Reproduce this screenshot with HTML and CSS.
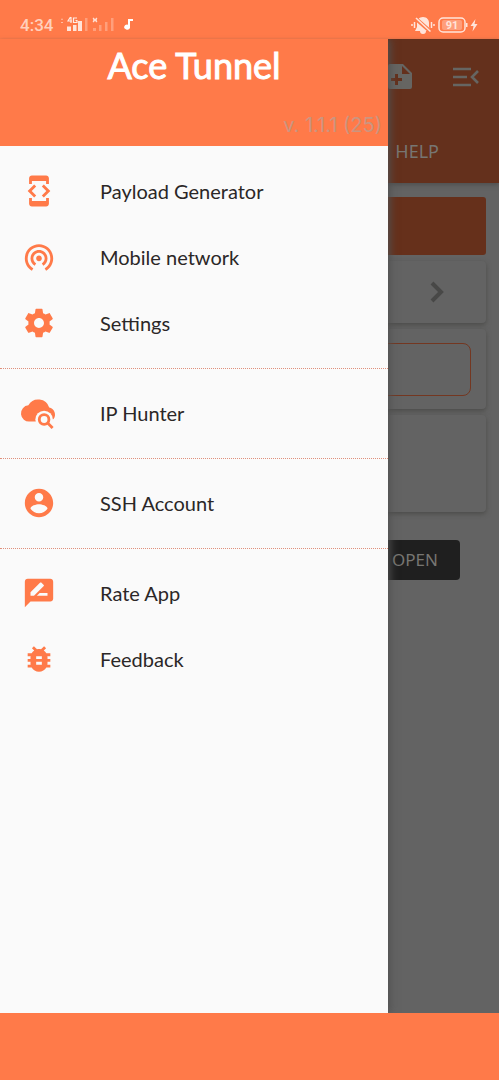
FILE: index.html
```html
<!DOCTYPE html>
<html lang="en">
<head>
<meta charset="utf-8">
<meta name="viewport" content="width=device-width, initial-scale=1">
<title>Ace Tunnel</title>
<link rel="stylesheet" href="styles.css">
</head>
<body>
<div class="screen">
  <header class="status">
    <div class="status-left">
      <span class="clock">4:34</span>
      <svg class="signals" viewBox="0 0 74 18" aria-hidden="true">
        <path d="M1 4l1-2 1 2zM1 6h2v1H1z" opacity=".5"/>
        <g fill="none" stroke="#fff" stroke-width="1.2" opacity=".85"><path d="M10.500 1L8 5h4M11 1v6M17 2h-3.500v4.500H17V4.500h-1.500"/></g>
        <path d="M7 10.500h4V15H7zM13 9h3.500v6H13zM18 5h4v10h-4z" opacity=".8"/>
        <path d="M25 2h2.500v13H25zM33 12h3v3h-3zM39 9h2.500v6H39zM45 6h2.500v9H45zM51 2h2.500v13H51z" opacity=".28"/>
        <path d="M33 2l4 4M37 2l-4 4M33 4h4" stroke="#fff" stroke-width="1.200" opacity=".75"/>
        <path d="M68 3h5v2h-3v7a3 2.500 0 1 1-2-3.300z"/>
      </svg>
    </div>
    <svg class="power" viewBox="0 0 68 18" aria-hidden="true">
      <g opacity=".8">
        <path d="M12 1c4 0 6 3 6 6v4l2 4h-5a3 3 0 0 1-6 0H4l2-4V7c0-3 2-6 6-6z"/>
        <path d="M1 8v2M3.500 6v6M20.500 6v6M23 8v2" stroke="#fff" stroke-width="1.500"/>
        <path d="M4 2l16 14" stroke="#ff7a49" stroke-width="4"/>
        <path d="M5 2l14.500 13.500" stroke="#fff" stroke-width="1.600"/>
        <rect x="28" y="2" width="26" height="14" rx="4" fill="none" stroke="#fff" stroke-width="1.500"/>
        <rect x="31" y="4" width="20" height="10" rx="2" opacity=".35"/>
        <path d="M55 7h1.500v4H55z"/>
        <text x="41" y="13" text-anchor="middle" class="charge">91</text>
        <path d="M64.500 3l-5 7h3l-1 5.500 5-7.500h-3z"/>
      </g>
    </svg>
  </header>

  <div class="stage">
    <main class="page">
      <div class="appbar">
        <div class="tools">
          <button class="tool" aria-label="Import file"><svg class="tool-icon" viewBox="0 0 26 26"><path fill-rule="evenodd" d="M3 0h13l9 9v14a2 2 0 0 1-2 2H3a2 2 0 0 1-2-2V2a2 2 0 0 1 2-2zM15 2v8h8zM8 10v4H4v3h4v4h3v-4h4v-3h-4v-4z"/></svg></button>
          <button class="tool" aria-label="Open menu"><svg class="tool-icon" viewBox="0 0 26 20"><path d="M0 2h18M0 10h14M0 18h18M25 4l-6 6 6 6" fill="none" stroke="#666562" stroke-width="2.600"/></svg></button>
        </div>
        <div class="tabs"><button class="tab">HELP</button></div>
      </div>
      <div class="cards">
        <div class="banner"></div>
        <div class="card choice"><svg class="chevron" viewBox="0 0 14 22" aria-hidden="true"><path d="M2 2l9 9-9 9" fill="none" stroke="#484847" stroke-width="4"/></svg></div>
        <div class="card entry"><div class="outline"></div></div>
        <div class="card details"></div>
      </div>
      <div class="actions"><button class="open">OPEN</button></div>
    </main>

    <aside class="drawer">
      <div class="drawer-head">
        <h1 class="title">Ace Tunnel</h1>
        <p class="version">v. 1.1.1 (25)</p>
      </div>
      <nav class="menu">
        <div class="group">
          <a class="item" href="#payload"><svg class="icon" viewBox="0 0 24 24"><path d="M7 5h10v2h2V3c0-1.100-.9-1.990-2-1.990L7 1c-1.100 0-2 .9-2 2v4h2V5zm8.410 11.590L20 12l-4.590-4.590L14 8.830 17.170 12 14 15.170l1.410 1.420zM10 15.170L6.830 12 10 8.830 8.590 7.410 4 12l4.590 4.590L10 15.170zM17 19H7v-2H5v4c0 1.100.9 2 2 2h10c1.100 0 2-.9 2-2v-4h-2v2z"/><path d="M6 2h12v3H6zM6 19h12v3H6z"/></svg>Payload Generator</a>
          <a class="item" href="#network"><svg class="icon" viewBox="0 0 24 24"><path d="M12 11c-1.100 0-2 .9-2 2s.9 2 2 2 2-.9 2-2-.9-2-2-2zm6 2c0-3.310-2.690-6-6-6s-6 2.690-6 6c0 2.220 1.210 4.150 3 5.190l1-1.740c-1.190-.7-2-1.970-2-3.450 0-2.210 1.790-4 4-4s4 1.790 4 4c0 1.480-.81 2.750-2 3.450l1 1.740c1.790-1.040 3-2.970 3-5.190zM12 3C6.480 3 2 7.480 2 13c0 3.700 2.010 6.920 4.990 8.650l1-1.730C5.610 18.530 4 15.960 4 13c0-4.420 3.580-8 8-8s8 3.580 8 8c0 2.960-1.610 5.530-4 6.920l1 1.730c2.990-1.730 5-4.950 5-8.650 0-5.520-4.480-10-10-10z"/></svg>Mobile network</a>
          <a class="item" href="#settings"><svg class="icon" viewBox="0 0 24 24"><path d="M19.430 12.980c.04-.32.070-.64.070-.98s-.03-.66-.07-.98l2.110-1.650c.19-.15.240-.42.120-.64l-2-3.460c-.12-.22-.39-.3-.61-.22l-2.490 1c-.52-.4-1.080-.73-1.690-.98l-.38-2.650C14.460 2.180 14.250 2 14 2h-4c-.25 0-.46.18-.49.42l-.38 2.650c-.61.25-1.170.59-1.690.98l-2.490-1c-.23-.09-.49 0-.61.22l-2 3.460c-.13.22-.07.49.12.64l2.110 1.650c-.04.32-.07.65-.07.98s.03.66.07.98l-2.110 1.650c-.19.15-.24.42-.12.64l2 3.460c.12.22.39.3.61.22l2.490-1c.52.4 1.080.73 1.690.98l.38 2.650c.03.24.24.42.49.42h4c.25 0 .46-.18.49-.42l.38-2.650c.61-.25 1.170-.59 1.690-.98l2.490 1c.23.09.49 0 .61-.22l2-3.460c.12-.22.07-.49-.12-.64l-2.110-1.650zM12 15.500c-1.930 0-3.500-1.570-3.500-3.500s1.570-3.500 3.500-3.500 3.500 1.570 3.500 3.500-1.570 3.500-3.500 3.500z"/></svg>Settings</a>
        </div>
        <div class="group">
          <a class="item" href="#hunter"><svg class="icon" viewBox="0 0 24 24"><path d="M5.500 18A5.500 5.500 0 0 1 4.500 6.600 8 8 0 0 1 19.200 8.200 5 5 0 0 1 22.400 16L20 18z"/><circle cx="15.600" cy="16.600" r="6.200" fill="#fafafa"/><circle cx="15.600" cy="16.600" r="3.400" fill="none" stroke="#ff7a49" stroke-width="2"/><path d="M17.900 18.900l3.700 3.700" stroke="#ff7a49" stroke-width="2"/></svg>IP Hunter</a>
        </div>
        <div class="group">
          <a class="item" href="#account"><svg class="icon" viewBox="0 0 24 24"><path d="M12 2C6.480 2 2 6.480 2 12s4.480 10 10 10 10-4.480 10-10S17.520 2 12 2zm0 3c1.660 0 3 1.340 3 3s-1.340 3-3 3-3-1.340-3-3 1.340-3 3-3zm0 14.200c-2.500 0-4.710-1.280-6-3.220.03-1.990 4-3.080 6-3.080 1.990 0 5.970 1.090 6 3.080-1.290 1.940-3.500 3.220-6 3.220z"/></svg>SSH Account</a>
        </div>
        <div class="group">
          <a class="item" href="#rate"><svg class="icon" viewBox="0 0 24 24"><path d="M20 2H4c-1.100 0-1.990.9-1.990 2L2 22l4-4h14c1.100 0 2-.9 2-2V4c0-1.100-.9-2-2-2zM6 14v-2.470l6.880-6.880c.2-.2.510-.2.710 0l1.770 1.770c.2.200.2.510 0 .71L8.470 14H6zm12 0h-7.500l2-2H18v2z"/></svg>Rate App</a>
          <a class="item" href="#feedback"><svg class="icon" viewBox="0 0 24 24"><path d="M20 8h-2.810c-.45-.78-1.070-1.450-1.820-1.960L17 4.410 15.590 3l-2.170 2.170C12.960 5.060 12.490 5 12 5s-.96.06-1.410.17L8.410 3 7 4.410l1.620 1.630C7.880 6.550 7.260 7.220 6.810 8H4v2h2.090c-.05.33-.09.66-.09 1v1H4v2h2v1c0 .34.040.67.090 1H4v2h2.810c1.040 1.790 2.970 3 5.190 3s4.150-1.210 5.190-3H20v-2h-2.090c.05-.33.090-.66.090-1v-1h2v-2h-2v-1c0-.34-.04-.67-.09-1H20V8zm-6 8h-4v-2h4v2zm0-4h-4v-2h4v2z"/></svg>Feedback</a>
        </div>
      </nav>
    </aside>
  </div>
  <footer class="navbar"></footer>
</div>
</body>
</html>
```
FILE: styles.css
```css
* { box-sizing: border-box; }
body {
  margin: 0;
  font-family: Lato, "Open Sans", sans-serif;
  background: #636363;
}
button { border: 0; padding: 0; background: none; font: inherit; color: inherit; }
.screen { min-height: 100vh; display: flex; flex-direction: column; }

.status {
  height: 39px;
  padding: 12px 20px 0;
  display: flex;
  justify-content: space-between;
  align-items: flex-start;
  background: #ff7a49;
  color: #ffd0bd;
}
.status-left { display: flex; gap: 7px; }
.clock { font: 500 17px/26px Roboto, sans-serif; }
.signals { width: 74px; height: 18px; margin-top: 4px; fill: #fff; }
.power { width: 68px; height: 18px; margin-top: 4px; fill: #fff; }
.charge { font: 700 11px Roboto, sans-serif; }

.stage { flex: 1; display: flex; flex-direction: column; position: relative; }
.page { flex: 1; background: #636363; color: #777672; }
.appbar { background: #64301c; padding: 22px 20px 0; box-shadow: 0 2px 4px #505050; }
.tools { display: flex; justify-content: flex-end; gap: 40px; height: 32px; align-items: center; }
.tool { display: flex; }
.tool-icon { width: 26px; height: 26px; fill: #666562; }
.tabs { display: flex; justify-content: flex-end; padding: 26px 40px 0; height: 90px; }
.tab { height: 64px; font: 18px/64px "Noto Sans", sans-serif; }

.cards { padding: 14px 13px 0; display: flex; flex-direction: column; gap: 6px; }
.banner { height: 58px; border-radius: 3px; background: #66301b; }
.card { border-radius: 4px; background: #636363; box-shadow: 0 2px 5px #4c4c4a; }
.choice { height: 62px; padding-right: 42px; display: flex; justify-content: flex-end; align-items: center; }
.chevron { width: 14px; height: 22px; }
.entry { height: 80px; padding: 14px 15px 12px; }
.outline { height: 53px; border: 1px solid #743721; border-radius: 8px; }
.details { height: 97px; }
.actions { display: flex; justify-content: flex-end; padding: 28px 39px; }
.open {
  width: 134px;
  height: 40px;
  padding-right: 22px;
  border-radius: 4px;
  background: #1f1f1f;
  text-align: right;
  font: 17px/38px "Noto Sans", sans-serif;
}

/* The drawer covers the page and leaves a strip of it on the right. */
.drawer { position: absolute; top: 0; bottom: 0; left: 0; width: calc(100% - 111px); background: #fafafa; box-shadow: 2px 0 8px #505050; clip-path: inset(0 -16px 0 0); }
.drawer-head { height: 107px; padding: 4px 6px 0; background: #ff7a49; }
.title { margin: 0; text-align: center; font-size: 36px; line-height: 44px; font-weight: 400; -webkit-text-stroke: 1px #fff; color: #fff; }
.version { margin: 0; padding-top: 24px; text-align: right; font: 20px/28px Inter, sans-serif; color: #cb9580; }
.menu { padding-top: 1px; }
.group { padding: 11px 0 12px; }
.group + .group { border-top: 1px dotted #e0907c; }
.item {
  height: 66px;
  padding-left: 22px;
  display: flex;
  align-items: center;
  gap: 44px;
  color: #2b2727;
  font-size: 20px;
  line-height: 28px;
  text-decoration: none;
}
.icon { width: 34px; height: 34px; fill: #ff7a49; overflow: visible; }
.navbar { height: 67px; background: #ff7a49; }
```
